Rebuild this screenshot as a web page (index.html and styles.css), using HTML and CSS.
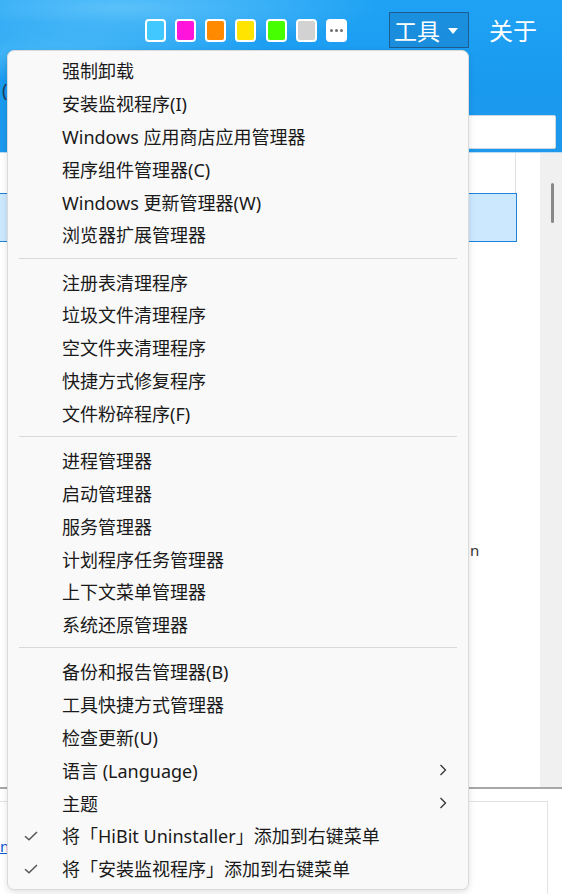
FILE: index.html
```html
<!DOCTYPE html>
<html lang="zh-CN">
<head>
<meta charset="utf-8">
<title>HiBit Uninstaller</title>
<link rel="stylesheet" href="styles.css">
</head>
<body>
<div class="app">
  <header class="header">
    <div class="toolbar">
      <div class="swatches">
        <span class="swatch s1"></span>
        <span class="swatch s2"></span>
        <span class="swatch s3"></span>
        <span class="swatch s4"></span>
        <span class="swatch s5"></span>
        <span class="swatch s6"></span>
        <span class="swatch more"><i></i><i></i><i></i></span>
      </div>
      <div class="tool-btn">工具<span class="tri"></span></div>
      <div class="about">关于</div>
    </div>
    <div class="search-row">
      <span class="peek">(</span>
      <div class="search"></div>
    </div>
  </header>
  <main class="content">
    <div class="list">
      <div class="row-top"><span class="col-line"></span></div>
      <div class="row-sel"></div>
      <div class="row-rest"><span class="stray">n</span></div>
    </div>
    <div class="vscroll"><span class="thumb"></span></div>
  </main>
  <div class="divider"></div>
  <footer class="footer">
    <div class="footbox"><a class="link">n</a></div>
  </footer>

  <nav class="menu">
    <div class="item">强制卸载</div>
    <div class="item">安装监视程序(I)</div>
    <div class="item">Windows 应用商店应用管理器</div>
    <div class="item">程序组件管理器(C)</div>
    <div class="item">Windows 更新管理器(W)</div>
    <div class="item">浏览器扩展管理器</div>
    <div class="sep"></div>
    <div class="item">注册表清理程序</div>
    <div class="item">垃圾文件清理程序</div>
    <div class="item">空文件夹清理程序</div>
    <div class="item">快捷方式修复程序</div>
    <div class="item">文件粉碎程序(F)</div>
    <div class="sep"></div>
    <div class="item">进程管理器</div>
    <div class="item">启动管理器</div>
    <div class="item">服务管理器</div>
    <div class="item">计划程序任务管理器</div>
    <div class="item">上下文菜单管理器</div>
    <div class="item">系统还原管理器</div>
    <div class="sep"></div>
    <div class="item">备份和报告管理器(B)</div>
    <div class="item">工具快捷方式管理器</div>
    <div class="item">检查更新(U)</div>
    <div class="item sub">语言 (Language)<svg class="chev" viewBox="0 0 8 12" width="8" height="12"><path d="M1.5 1 L6.5 6 L1.5 11" fill="none" stroke="#333" stroke-width="1.3"/></svg></div>
    <div class="item sub">主题<svg class="chev" viewBox="0 0 8 12" width="8" height="12"><path d="M1.5 1 L6.5 6 L1.5 11" fill="none" stroke="#333" stroke-width="1.3"/></svg></div>
    <div class="item checked"><svg class="check" viewBox="0 0 14 10" width="14" height="10"><path d="M1 5.2 L5 8.8 L13 1" fill="none" stroke="#555" stroke-width="1.5"/></svg>将「HiBit Uninstaller」添加到右键菜单</div>
    <div class="item checked"><svg class="check" viewBox="0 0 14 10" width="14" height="10"><path d="M1 5.2 L5 8.8 L13 1" fill="none" stroke="#555" stroke-width="1.5"/></svg>将「安装监视程序」添加到右键菜单</div>
  </nav>
</div>
</body>
</html>
```

FILE: styles.css
```css
* { box-sizing: border-box; }
html, body { margin: 0; padding: 0; }
body {
  width: 562px;
  height: 894px;
  overflow: hidden;
  background: #ffffff;
  font-family: "Noto Sans", "Noto Sans CJK SC", sans-serif;
}
.app {
  position: relative;
  width: 562px;
  height: 894px;
  display: flex;
  flex-direction: column;
}
.header {
  height: 153px;
  background:
    radial-gradient(ellipse 260px 40px at 120px 8px, rgba(140, 220, 255, 0.55), rgba(140, 220, 255, 0) 100%),
    radial-gradient(ellipse 220px 30px at 60px 52px, rgba(120, 215, 255, 0.5), rgba(120, 215, 255, 0) 100%),
    linear-gradient(180deg, #1fa2f4 0%, #1a9bf0 50%, #1c98ec 100%);
  display: flex;
  flex-direction: column;
  border-bottom: 1px solid #b8dcf5;
}
.toolbar {
  display: flex;
  align-items: center;
  justify-content: flex-end;
  height: 36px;
  margin-top: 12px;
  padding-right: 25px;
}
.swatches {
  display: flex;
  gap: 9.2px;
  margin-right: 42px;
}
.swatch {
  width: 21px;
  height: 23px;
  border: 2.5px solid #ffffff;
  border-radius: 4px;
}
.s1 { background: #40c8ff; }
.s2 { background: #ff14dc; }
.s3 { background: #ff8a00; }
.s4 { background: #ffe400; }
.s5 { background: #46ff00; }
.s6 { background: #d2d2d2; }
.more {
  background: #ffffff;
  display: flex;
  align-items: center;
  justify-content: center;
  gap: 2px;
}
.more i {
  width: 3px;
  height: 3px;
  border-radius: 50%;
  background: #707070;
}
.tool-btn {
  width: 80px;
  height: 36px;
  border: 1px solid #1c5d93;
  background: rgba(20, 90, 160, 0.25);
  color: #ffffff;
  font-family: "Noto Sans CJK SC", sans-serif;
  font-size: 23px;
  line-height: 34px;
  padding-left: 4px;
  display: flex;
  align-items: center;
  margin-right: 20px;
}
.tri {
  width: 0;
  height: 0;
  border-left: 5px solid transparent;
  border-right: 5px solid transparent;
  border-top: 6px solid #ffffff;
  margin-left: 8px;
  margin-top: 1px;
}
.about {
  color: #ffffff;
  font-family: "Noto Sans CJK SC", sans-serif;
  font-size: 24px;
  line-height: 34px;
}
.search-row {
  display: flex;
  align-items: flex-start;
  margin-top: 67px;
  padding-right: 6px;
}
.peek {
  width: 20px;
  color: #1a3a55;
  font-size: 18px;
  line-height: 24px;
  margin-top: -37px;
  padding-left: 2px;
}
.search {
  flex: 1;
  height: 34px;
  background: #ffffff;
  border: 1px solid #cfd8e0;
  border-radius: 2px;
}
.content {
  display: flex;
  height: 634px;
}
.list {
  flex: 1;
  display: flex;
  flex-direction: column;
}
.row-top {
  height: 40px;
  display: flex;
  justify-content: flex-end;
  padding-right: 24px;
}
.col-line {
  width: 1px;
  background: #e2e2e2;
}
.row-sel {
  height: 49px;
  width: 517px;
  background: #cce8ff;
  border: 1px solid #1e82d8;
  border-left: none;
}
.row-rest {
  flex: 1;
  position: relative;
}
.stray {
  position: absolute;
  left: 470px;
  top: 298px;
  font-size: 15px;
  color: #333;
}
.vscroll {
  width: 22px;
  background: #f0f0f0;
  padding-top: 30px;
  padding-left: 11px;
}
.thumb {
  display: block;
  width: 3px;
  height: 40px;
  background: #888888;
  border-radius: 2px;
}
.divider {
  height: 2px;
  background: #a8a8a8;
}
.footer {
  flex: 1;
  padding-top: 12px;
  padding-right: 14px;
}
.footbox {
  height: 100%;
  border: 1px solid #e3e3e3;
  border-left: none;
  border-bottom: none;
  position: relative;
}
.link {
  position: absolute;
  left: 0;
  top: 34px;
  font-size: 15px;
  color: #0a5cd6;
  text-decoration: underline;
}

.menu {
  position: absolute;
  left: 7px;
  top: 50px;
  width: 462px;
  height: 840px;
  background: #f9f9f9;
  border: 1px solid #dadada;
  border-radius: 7px;
  box-shadow: 0 2px 6px rgba(0, 0, 0, 0.12);
  padding: 3px 0 4px 0;
  font-family: "Noto Sans", "Noto Sans CJK SC", sans-serif;
  font-size: 18px;
  color: #1a1a1a;
}
.item {
  height: 32.8px;
  display: flex;
  align-items: center;
  padding-left: 54px;
  position: relative;
  white-space: nowrap;
}
.sep {
  height: 14.5px;
  margin: 0 11px;
  display: flex;
  align-items: center;
}
.sep::before {
  content: "";
  display: block;
  width: 100%;
  height: 1px;
  background: #d9d9d9;
}
.chev {
  position: absolute;
  right: 21px;
  top: 11px;
}
.check {
  position: absolute;
  left: 16px;
  top: 12px;
}
```
